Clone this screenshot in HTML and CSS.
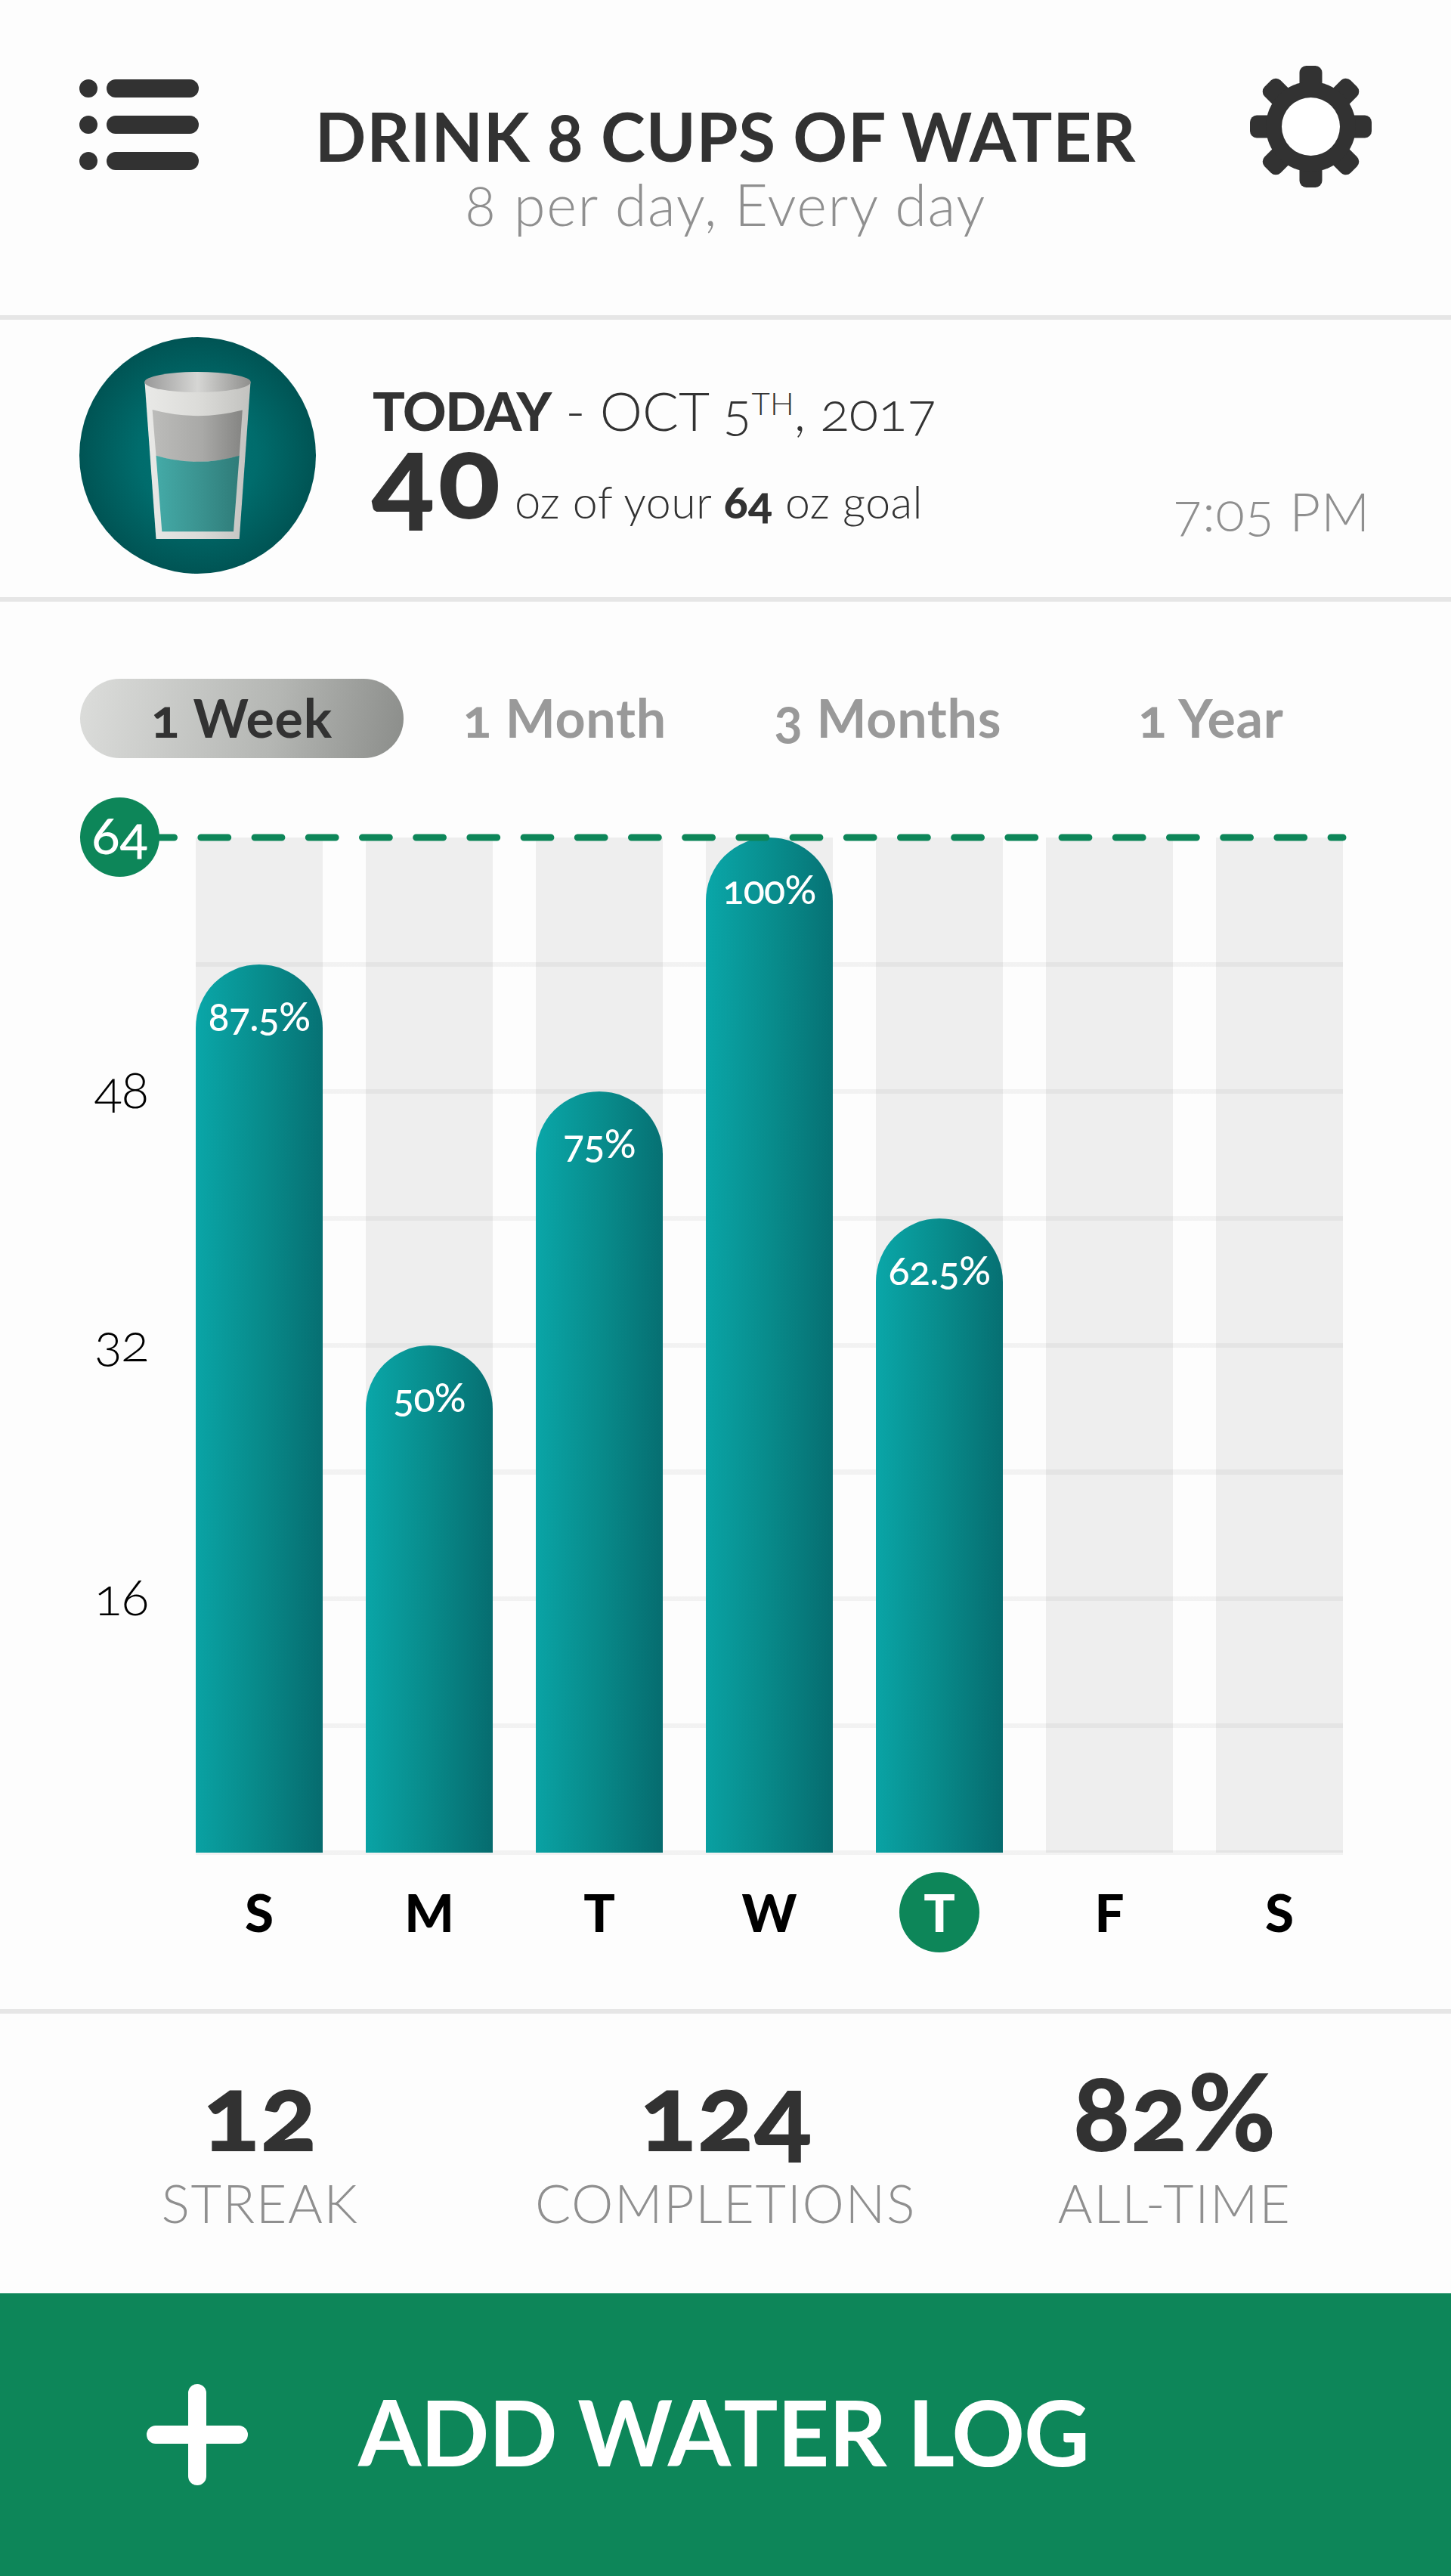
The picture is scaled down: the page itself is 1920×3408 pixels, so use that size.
FILE: index.html
```
<!DOCTYPE html>
<html lang="en">

<head>
 <meta charset="UTF-8">
 <meta name="viewport" content="width=device-width, initial-scale=1.0">
 <title>Drink 8 Cups of Water</title>
 <link rel="stylesheet" href="styles.css">
</head>

<body>
 <header class="top">
  <svg class="menu" viewBox="0 0 158 120">
   <circle cx="12" cy="12" r="12"/><rect x="36" width="122" height="24" rx="12"/>
   <circle cx="12" cy="60" r="12"/><rect x="36" y="48" width="122" height="24" rx="12"/>
   <circle cx="12" cy="108" r="12"/><rect x="36" y="96" width="122" height="24" rx="12"/>
  </svg>
  <div class="heading">
   <h1>DRINK 8 CUPS OF WATER</h1>
   <p>8 per day, Every day</p>
  </div>
  <svg class="gear" viewBox="-80.5 -80.5 161 161">
   <g id="teeth">
    <rect x="-15" y="-80.5" width="30" height="161" rx="9"/>
    <rect x="-15" y="-80.5" width="30" height="161" rx="9" transform="rotate(45)"/>
    <rect x="-15" y="-80.5" width="30" height="161" rx="9" transform="rotate(90)"/>
    <rect x="-15" y="-80.5" width="30" height="161" rx="9" transform="rotate(135)"/>
   </g>
   <circle r="59.5"/>
   <circle r="38.5" fill="#fff"/>
  </svg>
 </header>

 <section class="today">
  <svg class="glass" viewBox="0 0 313 313">
   <defs>
    <radialGradient id="disc"><stop offset="0" stop-color="#007474"/><stop offset=".5" stop-color="#006c6c"/><stop offset="1" stop-color="#005454"/></radialGradient>
    <linearGradient id="body"><stop offset="0" stop-color="#e9e9e7"/><stop offset=".5" stop-color="#dcdcd9"/><stop offset="1" stop-color="#c2c2bf"/></linearGradient>
    <linearGradient id="rim"><stop offset="0" stop-color="#999"/><stop offset=".5" stop-color="#d6d6d4"/><stop offset="1" stop-color="#8f8f8d"/></linearGradient>
    <linearGradient id="empty"><stop offset="0" stop-color="#bcbcba"/><stop offset=".55" stop-color="#a9a9a7"/><stop offset="1" stop-color="#858583"/></linearGradient>
    <linearGradient id="water"><stop offset="0" stop-color="#44aaa7"/><stop offset=".5" stop-color="#3b9491"/><stop offset="1" stop-color="#2f7c79"/></linearGradient>
   </defs>
   <circle cx="156.5" cy="156.5" r="156.5" fill="url(#disc)"/>
   <path d="M86.5 59.7L101.5 267H211.7L226.5 59.7Z" fill="url(#body)"/>
   <ellipse cx="156.5" cy="59.5" rx="70.2" ry="13.5" fill="url(#rim)"/>
   <path d="M96.6 96Q156 112 215.8 96.5L211.7 157Q156 173 101.5 157Z" fill="url(#empty)"/>
   <path d="M101.5 156.7Q156 173 211.7 156.7L204 257.3H109.3Z" fill="url(#water)"/>
  </svg>
  <div class="info">
   <p class="date"><b>TODAY</b> - OCT 5<sup>TH</sup>, 2017</p>
   <p class="amount"><strong>40</strong><span>0z of your <b>64</b> oz goal</span></p>
  </div>
  <p class="time">7:05 PM</p>
 </section>

 <section class="history">
  <nav class="tabs">
   <a class="active">1 Week</a>
   <a>1 Month</a>
   <a>3 Months</a>
   <a>1 Year</a>
  </nav>
  <div class="chart">
   <ul class="axis">
    <li class="goal">64</li>
    <li>48</li>
    <li>32</li>
    <li>16</li>
   </ul>
   <div class="plot">
    <div class="col"><div class="bar" style="height:87.5%">87.5%</div></div>
    <div class="col"><div class="bar" style="height:50%">50%</div></div>
    <div class="col"><div class="bar" style="height:75%">75%</div></div>
    <div class="col"><div class="bar" style="height:100%">100%</div></div>
    <div class="col"><div class="bar" style="height:62.5%">62.5%</div></div>
    <div class="col"></div>
    <div class="col"></div>
    <svg class="goal-line" viewBox="0 0 1590 10">
     <path d="M7.7 5H1590" stroke-dasharray="35.8 35.4"/>
    </svg>
   </div>
  </div>
  <ul class="days">
   <li>S</li>
   <li>M</li>
   <li>T</li>
   <li>W</li>
   <li class="current">T</li>
   <li>F</li>
   <li>S</li>
  </ul>
 </section>

 <section class="stats">
  <div><strong>12</strong><span>STREAK</span></div>
  <div><strong>124</strong><span>COMPLETIONS</span></div>
  <div><strong>82%</strong><span>ALL-TIME</span></div>
 </section>

 <button class="add">
  <svg viewBox="0 0 134 134"><path d="M67 12V122M12 67H122"/></svg>
  <span>ADD WATER LOG</span>
 </button>
</body>

</html>
```
FILE: styles.css
```
* {
 box-sizing: border-box;
 margin: 0;
 padding: 0;
}

body {
 width: 1920px;
 background-color: #fdfdfd;
 color: #323232;
 font-family: Lato, "Open Sans", sans-serif;
 font-variant-numeric: oldstyle-nums;
 white-space: nowrap;
}

ul {
 list-style-type: none;
}

svg {
 display: block;
 flex: none;
}

/* header */

.top {
 display: flex;
 height: 423px;
 padding: 0 105px;
 border-bottom: 6px solid #e6e6e6;
}

.menu {
 width: 158px;
 height: 120px;
 margin-top: 105px;
 fill: #323232;
}

.gear {
 width: 161px;
 height: 161px;
 margin-top: 87px;
 fill: #323232;
}

.heading {
 flex: 1;
 padding: 135px 0 0 3px;
 text-align: center;
}

.heading h1 {
 font-size: 89px;
 line-height: 90px;
 font-weight: 700;
 letter-spacing: .75px;
}

.heading p {
 font-size: 76px;
 line-height: 90px;
 font-weight: 300;
 letter-spacing: 1.6px;
 color: #8f8f8f;
}

/* today */

.today {
 display: flex;
 height: 373px;
 padding: 23px 107px 0 105px;
 border-bottom: 6px solid #e6e6e6;
}

.glass {
 width: 313px;
 height: 313px;
}

.info {
 flex: 1;
 padding: 57px 0 0 75px;
}

.date {
 font-size: 71px;
 line-height: 80px;
 font-weight: 300;
}

.date b {
 font-weight: 900;
 letter-spacing: -1.3px;
}

.date sup {
 display: inline-block;
 font-size: 42px;
 line-height: 42px;
 vertical-align: 21px;
}

.amount {
 display: flex;
 align-items: baseline;
 gap: 15px;
 margin-top: -4px;
 line-height: 96px;
 font-size: 59px;
 font-weight: 300;
 letter-spacing: .5px;
}

.amount strong {
 margin-left: -1px;
 font-size: 153px;
 font-weight: 900;
 letter-spacing: 5px;
}

.amount b {
 font-weight: 900;
}

.time {
 align-self: flex-start;
 padding-top: 190px;
 font-size: 71px;
 line-height: 80px;
 font-weight: 300;
 letter-spacing: .6px;
 color: #8f8f8f;
}

/* chart */

.history {
 height: 1868px;
 padding-top: 102px;
 border-bottom: 6px solid #e6e6e6;
}

.tabs {
 display: grid;
 grid-template-columns: repeat(4, 1fr);
 width: 1710px;
 margin-left: 106px;
}

.tabs a {
 height: 105px;
 border-radius: 53px;
 font-size: 70px;
 line-height: 102px;
 font-weight: 700;
 letter-spacing: .7px;
 text-align: center;
 color: #999;
}

.tabs .active {
 color: #323232;
 background-image: linear-gradient(100deg, #dcdddb, #b4b6b3 60%, #8b8d8a);
}

.chart {
 display: flex;
 padding: 52px 0 0 106px;
}

.axis {
 display: flex;
 flex-direction: column;
 justify-content: space-between;
 width: 153px;
 height: 1112px;
}

.axis li {
 width: 90px;
 height: 105px;
 font-size: 69px;
 line-height: 97px;
 font-weight: 300;
 letter-spacing: -1.5px;
 text-align: right;
 color: #000;
}

.axis .goal {
 width: 105px;
 border-radius: 50%;
 background-color: #0d8659;
 color: #fff;
 font-weight: 500;
 letter-spacing: 0;
 text-align: center;
}

.plot {
 position: relative;
 display: grid;
 grid-template-columns: repeat(7, 168px);
 gap: 57px;
 width: 1518px;
 height: 1343px;
 margin-top: 53px;
}

/* horizontal grid lines, one per 8 oz */
.plot::before {
 content: "";
 position: absolute;
 top: 165px;
 left: 0;
 width: 1518px;
 height: 1181px;
 background-image: repeating-linear-gradient(rgba(0, 0, 0, .045) 0 6px, transparent 6px 167.875px);
}

.col {
 display: flex;
 align-items: flex-end;
 background-color: #eee;
}

.bar {
 position: relative;
 width: 168px;
 padding-top: 37px;
 border-radius: 84px 84px 0 0;
 background-image: linear-gradient(91deg, #0aa7a9, #088b8b 50%, #066b6e);
 color: #fff;
 font-size: 52px;
 line-height: 62px;
 font-weight: 500;
 letter-spacing: -.7px;
 text-align: center;
}

.goal-line {
 position: absolute;
 top: -5px;
 left: -72px;
 width: 1590px;
 height: 10px;
 overflow: visible;
 fill: none;
 stroke: #0d8659;
 stroke-width: 9px;
 stroke-linecap: round;
}

.days {
 display: grid;
 grid-template-columns: repeat(7, 168px);
 gap: 57px;
 justify-items: center;
 margin: 26px 0 0 259px;
}

.days li {
 width: 106px;
 border-radius: 50%;
 font-size: 69px;
 line-height: 106px;
 font-weight: 900;
 text-align: center;
 color: #000;
}

.days .current {
 background-color: #0d8659;
 color: #fff;
}

/* stats */

.stats {
 display: grid;
 grid-template-columns: 688px 544px 644px;
 height: 370px;
 padding-top: 68px;
 text-align: center;
}

.stats strong {
 display: block;
 font-size: 141px;
 line-height: 120px;
 font-weight: 900;
}

.stats span {
 display: block;
 padding-top: 20px;
 font-size: 70px;
 line-height: 84px;
 font-weight: 300;
 letter-spacing: 1.6px;
 color: #8f8f8f;
}

/* button */

.add {
 display: flex;
 align-items: center;
 gap: 146px;
 width: 1920px;
 height: 374px;
 padding-left: 194px;
 border: 0;
 background-color: #0d8659;
 color: #fff;
 font-family: inherit;
 font-size: 120px;
 font-weight: 700;
 letter-spacing: -1px;
}

.add span {
 padding-bottom: 8px;
}

.add svg {
 width: 134px;
 height: 134px;
 fill: none;
 stroke: #fff;
 stroke-width: 24px;
 stroke-linecap: round;
}
```
